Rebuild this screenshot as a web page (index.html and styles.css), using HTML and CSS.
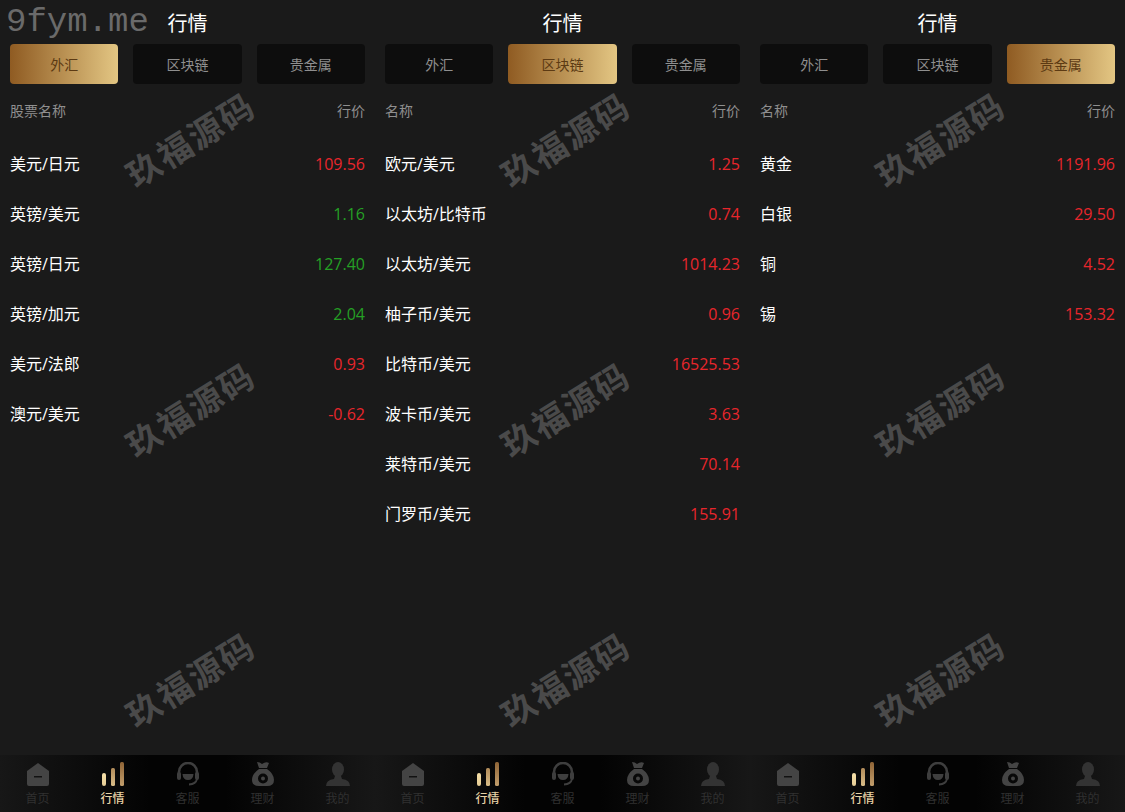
FILE: index.html
```html
<!DOCTYPE html>
<html>
<head>
    <meta charset="UTF-8">
    <title>行情</title>
    <link rel="stylesheet" href="styles.css">
</head>
<body>
    <svg class="icon-defs" width="0" height="0">
        <defs>
            <linearGradient id="barA" x1="0" y1="0" x2="0" y2="1"><stop offset="0" stop-color="#f5dfa8"/><stop offset="1" stop-color="#e6cd95"/></linearGradient>
            <linearGradient id="barB" x1="0" y1="0" x2="0" y2="1"><stop offset="0" stop-color="#b08a58"/><stop offset="1" stop-color="#d9bd88"/></linearGradient>
            <linearGradient id="barC" x1="0" y1="0" x2="0" y2="1"><stop offset="0" stop-color="#8f6436"/><stop offset="1" stop-color="#c29e6c"/></linearGradient>
            <symbol id="i-home" viewBox="0 0 24 24">
                <path d="M12 1 L23 9 V22 Q23 24 21 24 H3 Q1 24 1 22 V9 Z M8 14 V15.500 H16 V14 Z" fill="#444" fill-rule="evenodd"/>
            </symbol>
            <symbol id="i-chart" viewBox="0 0 24 24">
                <rect x="1" y="11" width="4" height="13" rx="2" fill="url(#barA)"/>
                <rect x="10" y="6" width="4" height="18" rx="1.500" fill="url(#barB)"/>
                <rect x="19" y="0" width="4" height="24" rx="1.500" fill="url(#barC)"/>
            </symbol>
            <symbol id="i-service" viewBox="0 0 24 24">
                <path d="M3 13 V10 A9 9 0 0 1 21 10 V13" fill="none" stroke="#3e3e3e" stroke-width="2.600"/>
                <rect x="1" y="10" width="4" height="8" rx="2" fill="#3e3e3e"/>
                <rect x="19" y="10" width="4" height="8" rx="2" fill="#3e3e3e"/>
                <path d="M6.500 12 H17.500 Q17 18 12 18 Q7 18 6.500 12 Z" fill="#3e3e3e"/>
                <path d="M21 17 Q20 22 13 22.500" fill="none" stroke="#3e3e3e" stroke-width="1.800"/>
            </symbol>
            <symbol id="i-bag" viewBox="0 0 24 24">
                <path d="M6 0 Q9 0 11 2 Q15 -1 18 1 L16 6 H8 Z" fill="#444"/>
                <path d="M8 7 H16 Q23 12 23 18 Q23 24 16 24 H8 Q1 24 1 18 Q1 12 8 7 Z M12 11.500 A5 5 0 1 0 12 21.500 A5 5 0 1 0 12 11.500 Z M12 14.500 A2 2 0 1 1 12 18.500 A2 2 0 1 1 12 14.500 Z" fill="#444" fill-rule="evenodd"/>
            </symbol>
            <symbol id="i-user" viewBox="0 0 24 24">
                <ellipse cx="12" cy="7.500" rx="6" ry="7.500" fill="#333"/>
                <path d="M9 14 H15 L16 17 Q24 18 24 24 H0 Q0 18 8 17 Z" fill="#333"/>
            </symbol>
        </defs>
    </svg>

    <div class="site-mark">9fym.me</div>

    <div class="page">
        <!-- 外汇 -->
        <section class="panel">
            <h1 class="title">行情</h1>
            <div class="tabs">
                <a class="tab active">外汇</a>
                <a class="tab">区块链</a>
                <a class="tab">贵金属</a>
            </div>
            <div class="table-head"><span>股票名称</span><span>行价</span></div>
            <ul class="quotes">
                <li><span>美元/日元</span><span class="up">109.56</span></li>
                <li><span>英镑/美元</span><span class="down">1.16</span></li>
                <li><span>英镑/日元</span><span class="down">127.40</span></li>
                <li><span>英镑/加元</span><span class="down">2.04</span></li>
                <li><span>美元/法郎</span><span class="up">0.93</span></li>
                <li><span>澳元/美元</span><span class="up">-0.62</span></li>
            </ul>
            <div class="watermarks"><span>玖福源码</span><span>玖福源码</span><span>玖福源码</span></div>
            <nav class="bottom-nav">
                <a class="nav-item"><svg><use href="#i-home"/></svg><span>首页</span></a>
                <a class="nav-item active"><svg><use href="#i-chart"/></svg><span>行情</span></a>
                <a class="nav-item"><svg><use href="#i-service"/></svg><span>客服</span></a>
                <a class="nav-item"><svg><use href="#i-bag"/></svg><span>理财</span></a>
                <a class="nav-item"><svg><use href="#i-user"/></svg><span>我的</span></a>
            </nav>
        </section>

        <!-- 区块链 -->
        <section class="panel">
            <h1 class="title">行情</h1>
            <div class="tabs">
                <a class="tab">外汇</a>
                <a class="tab active">区块链</a>
                <a class="tab">贵金属</a>
            </div>
            <div class="table-head"><span>名称</span><span>行价</span></div>
            <ul class="quotes">
                <li><span>欧元/美元</span><span class="up">1.25</span></li>
                <li><span>以太坊/比特币</span><span class="up">0.74</span></li>
                <li><span>以太坊/美元</span><span class="up">1014.23</span></li>
                <li><span>柚子币/美元</span><span class="up">0.96</span></li>
                <li><span>比特币/美元</span><span class="up">16525.53</span></li>
                <li><span>波卡币/美元</span><span class="up">3.63</span></li>
                <li><span>莱特币/美元</span><span class="up">70.14</span></li>
                <li><span>门罗币/美元</span><span class="up">155.91</span></li>
            </ul>
            <div class="watermarks"><span>玖福源码</span><span>玖福源码</span><span>玖福源码</span></div>
            <nav class="bottom-nav">
                <a class="nav-item"><svg><use href="#i-home"/></svg><span>首页</span></a>
                <a class="nav-item active"><svg><use href="#i-chart"/></svg><span>行情</span></a>
                <a class="nav-item"><svg><use href="#i-service"/></svg><span>客服</span></a>
                <a class="nav-item"><svg><use href="#i-bag"/></svg><span>理财</span></a>
                <a class="nav-item"><svg><use href="#i-user"/></svg><span>我的</span></a>
            </nav>
        </section>

        <!-- 贵金属 -->
        <section class="panel">
            <h1 class="title">行情</h1>
            <div class="tabs">
                <a class="tab">外汇</a>
                <a class="tab">区块链</a>
                <a class="tab active">贵金属</a>
            </div>
            <div class="table-head"><span>名称</span><span>行价</span></div>
            <ul class="quotes">
                <li><span>黄金</span><span class="up">1191.96</span></li>
                <li><span>白银</span><span class="up">29.50</span></li>
                <li><span>铜</span><span class="up">4.52</span></li>
                <li><span>锡</span><span class="up">153.32</span></li>
            </ul>
            <div class="watermarks"><span>玖福源码</span><span>玖福源码</span><span>玖福源码</span></div>
            <nav class="bottom-nav">
                <a class="nav-item"><svg><use href="#i-home"/></svg><span>首页</span></a>
                <a class="nav-item active"><svg><use href="#i-chart"/></svg><span>行情</span></a>
                <a class="nav-item"><svg><use href="#i-service"/></svg><span>客服</span></a>
                <a class="nav-item"><svg><use href="#i-bag"/></svg><span>理财</span></a>
                <a class="nav-item"><svg><use href="#i-user"/></svg><span>我的</span></a>
            </nav>
        </section>
    </div>
</body>
</html>
```

FILE: styles.css
```css
/* page */
html, body {
    margin: 0;
    padding: 0;
    height: 812px;
    overflow: hidden;
    background-color: #1a1a1a;
    font-family: "Noto Sans CJK SC", "Liberation Sans", sans-serif;
    color: #fff;
}

.icon-defs {
    position: absolute;
}

/* corner mark over the first header */
.site-mark {
    position: absolute;
    top: 0;
    left: 6px;
    z-index: 5;
    font-family: "Liberation Mono", monospace;
    font-size: 34px;
    line-height: 44px;
    color: #6a6a6a;
}

.page {
    display: grid;
    grid-template-columns: repeat(3, 375px);
    height: 812px;
}

.panel {
    position: relative;
    display: flex;
    flex-direction: column;
    height: 812px;
    overflow: hidden;
}

/* header */
.title {
    margin: 0;
    height: 44px;
    font-size: 20px;
    font-weight: 400;
    line-height: 46px;
    text-align: center;
}

/* tabs */
.tabs {
    display: grid;
    grid-template-columns: repeat(3, 1fr);
    gap: 15px;
    padding: 0 10px;
}

.tab {
    height: 40px;
    border-radius: 4px;
    background: #0d0d0d;
    color: #8f8f8f;
    font-size: 14px;
    line-height: 41px;
    text-align: center;
}

.tab.active {
    background: linear-gradient(90deg, #8f5b22, #e3c683);
    color: #5c3a13;
}

/* list */
.table-head {
    display: flex;
    justify-content: space-between;
    padding: 0 10px;
    margin-top: 15px;
    height: 22px;
    font-size: 14px;
    line-height: 22px;
    color: #8f8f8f;
}

.quotes {
    list-style: none;
    margin: 18px 0 0;
    padding: 0 10px;
}

.quotes li {
    display: flex;
    justify-content: space-between;
    height: 50px;
    font-family: "Open Sans", "Noto Sans CJK SC", sans-serif;
    font-size: 16px;
    line-height: 50px;
}

.up {
    color: #e8262c;
}

.down {
    color: #25a025;
}

/* watermark layer */
.watermarks span {
    position: absolute;
    left: 190px;
    width: 180px;
    margin-left: -90px;
    font-size: 34px;
    font-weight: 700;
    line-height: 40px;
    letter-spacing: 2px;
    text-align: center;
    color: #4a4a4a;
    transform: rotate(-32deg);
    pointer-events: none;
}

.watermarks span:nth-child(1) { top: 119px; }
.watermarks span:nth-child(2) { top: 389px; }
.watermarks span:nth-child(3) { top: 659px; }

/* bottom nav */
.bottom-nav {
    position: absolute;
    left: 0;
    right: 0;
    bottom: 0;
    height: 57px;
    display: grid;
    grid-template-columns: repeat(5, 1fr);
    background: linear-gradient(90deg, #171717, #030303 40%, #030303 60%, #171717);
}

.nav-item {
    display: flex;
    flex-direction: column;
    align-items: center;
    padding-top: 7px;
    font-size: 12px;
    line-height: 17px;
    color: #303030;
}

.nav-item svg {
    width: 24px;
    height: 24px;
    margin-bottom: 3px;
}

.nav-item.active {
    color: #e8d3a6;
    font-weight: 500;
}
```
